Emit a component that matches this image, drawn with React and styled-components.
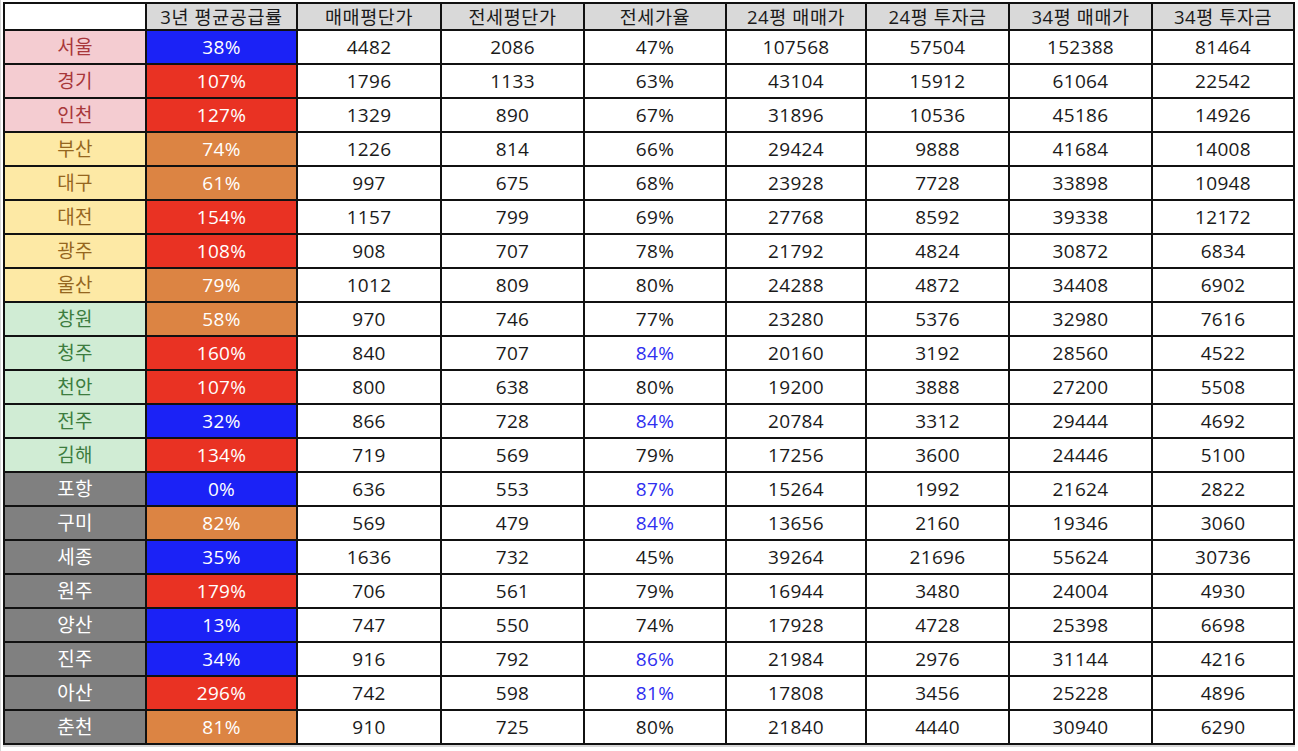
import React from "react";
import styled, { createGlobalStyle } from "styled-components";

const Global = createGlobalStyle`
  html, body { margin: 0; padding: 0; background: #fff; }
  body {
    font-family: "Open Sans", "Noto Sans CJK KR", sans-serif;
    width: 1298px;
    height: 751px;
    overflow: hidden;
  }
`;

const Sheet = styled.div`
  padding: 2px 0 0 2px;
  border-left: 1px solid #d6d6d6;
  height: 751px;
  box-sizing: border-box;
`;

const Grid = styled.div`
  display: grid;
  grid-template-columns: 140px 149px 142px 141px 140px 138px 141px 141px 140px;
  grid-template-rows: 25px repeat(21, 32px);
  gap: 2px;
  padding: 2px;
  background: #111;
  width: max-content;
  box-shadow: 0 2px 0 #d6d6d6;
`;

const palettes = {
  head: { bg: "#d9d9d9", fg: "#1a1a1a" },
  plain: { bg: "#ffffff", fg: "#1a1a1a" },
  pink: { bg: "#f4ccd1", fg: "#a8373a" },
  yellow: { bg: "#fde9a5", fg: "#95661f" },
  green: { bg: "#d0ecd4", fg: "#3d7d3f" },
  gray: { bg: "#808080", fg: "#ffffff" },
  blue: { bg: "#1b22f6", fg: "#ffffff" },
  red: { bg: "#e93223", fg: "#ffffff" },
  orange: { bg: "#dc8443", fg: "#ffffff" },
};

const Cell = styled.div`
  display: flex;
  align-items: center;
  justify-content: center;
  padding-top: 1px;
  background: ${(p) => palettes[p.$tone].bg};
  color: ${(p) => (p.$hi ? "#2f2ff0" : palettes[p.$tone].fg)};
  font-size: ${(p) => (p.$tone === "head" ? "18.5px" : "19px")};
  letter-spacing: ${(p) => (p.$tone === "head" ? "0.6px" : "0.3px")};
  line-height: 1;
  white-space: pre;
`;

const headers = ["", "3년 평균공급률", "매매평단가", "전세평단가", "전세가율", "24평 매매가", "24평 투자금", "34평 매매가", "34평 투자금"];

const rows = [
  ["서울", "pink", "38%", "blue", 4482, 2086, "47%", 107568, 57504, 152388, 81464],
  ["경기", "pink", "107%", "red", 1796, 1133, "63%", 43104, 15912, 61064, 22542],
  ["인천", "pink", "127%", "red", 1329, 890, "67%", 31896, 10536, 45186, 14926],
  ["부산", "yellow", "74%", "orange", 1226, 814, "66%", 29424, 9888, 41684, 14008],
  ["대구", "yellow", "61%", "orange", 997, 675, "68%", 23928, 7728, 33898, 10948],
  ["대전", "yellow", "154%", "red", 1157, 799, "69%", 27768, 8592, 39338, 12172],
  ["광주", "yellow", "108%", "red", 908, 707, "78%", 21792, 4824, 30872, 6834],
  ["울산", "yellow", "79%", "orange", 1012, 809, "80%", 24288, 4872, 34408, 6902],
  ["창원", "green", "58%", "orange", 970, 746, "77%", 23280, 5376, 32980, 7616],
  ["청주", "green", "160%", "red", 840, 707, "84%", 20160, 3192, 28560, 4522],
  ["천안", "green", "107%", "red", 800, 638, "80%", 19200, 3888, 27200, 5508],
  ["전주", "green", "32%", "blue", 866, 728, "84%", 20784, 3312, 29444, 4692],
  ["김해", "green", "134%", "red", 719, 569, "79%", 17256, 3600, 24446, 5100],
  ["포항", "gray", "0%", "blue", 636, 553, "87%", 15264, 1992, 21624, 2822],
  ["구미", "gray", "82%", "orange", 569, 479, "84%", 13656, 2160, 19346, 3060],
  ["세종", "gray", "35%", "blue", 1636, 732, "45%", 39264, 21696, 55624, 30736],
  ["원주", "gray", "179%", "red", 706, 561, "79%", 16944, 3480, 24004, 4930],
  ["양산", "gray", "13%", "blue", 747, 550, "74%", 17928, 4728, 25398, 6698],
  ["진주", "gray", "34%", "blue", 916, 792, "86%", 21984, 2976, 31144, 4216],
  ["아산", "gray", "296%", "red", 742, 598, "81%", 17808, 3456, 25228, 4896],
  ["춘천", "gray", "81%", "orange", 910, 725, "80%", 21840, 4440, 30940, 6290],
];

export default function App() {
  return (
    <>
      <Global />
      <Sheet>
        <Grid>
          {headers.map((h, i) => (
            <Cell key={"h" + i} $tone={i === 0 ? "plain" : "head"}>{h}</Cell>
          ))}
          {rows.map((r) => {
            const [name, tone, rate, rateTone, ...rest] = r;
            const ratio = parseInt(rest[2], 10);
            return (
              <React.Fragment key={name}>
                <Cell $tone={tone}>{name}</Cell>
                <Cell $tone={rateTone}>{rate}</Cell>
                {rest.map((v, j) => (
                  <Cell key={j} $tone="plain" $hi={j === 2 && ratio >= 81}>{v}</Cell>
                ))}
              </React.Fragment>
            );
          })}
        </Grid>
      </Sheet>
    </>
  );
}
